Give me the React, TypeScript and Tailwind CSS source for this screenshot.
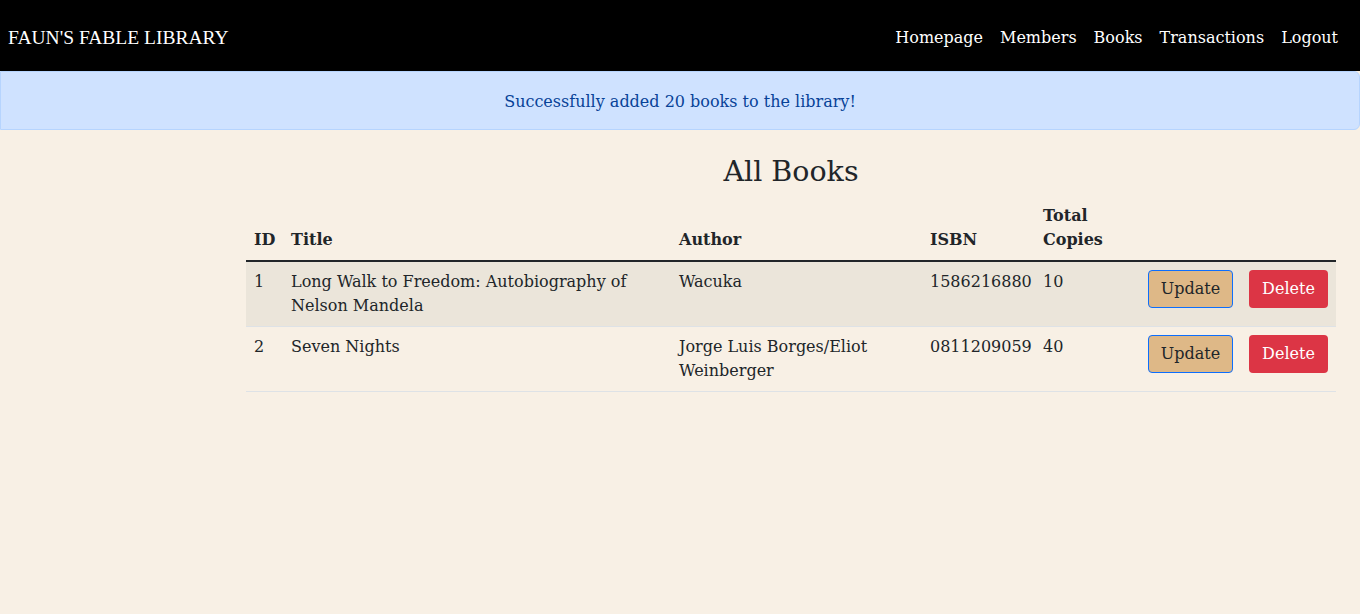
import React from "react";

const books = [
  { id: 1, title: "Long Walk to Freedom: Autobiography of Nelson Mandela", author: "Wacuka", isbn: "1586216880", copies: 10 },
  { id: 2, title: "Seven Nights", author: "Jorge Luis Borges/Eliot Weinberger", isbn: "0811209059", copies: 40 },
];

export default function App() {
  return (
    <div className="min-h-[614px] w-full bg-[#f8f0e5] text-[#212529] font-['DejaVu_Serif',serif] text-[16px] leading-6">
      {/* Navbar */}
      <nav className="h-[71px] bg-black flex items-center justify-between pl-2 pr-[22px] pt-[5px]">
        <span className="text-white text-[19.5px] font-['Liberation_Serif',serif]">FAUN'S FABLE LIBRARY</span>
        <div className="flex items-center gap-[17px] text-white">
          <a>Homepage</a>
          <a>Members</a>
          <a>Books</a>
          <a>Transactions</a>
          <a>Logout</a>
        </div>
      </nav>

      {/* Alert */}
      <div className="h-[59px] flex items-center justify-center pt-[2px] bg-[#cfe2ff] border border-[#b6d4fe] rounded-r-md text-[#084298]">
        Successfully added 20 books to the library!
      </div>

      <div className="pl-[246px] pr-[24px]">
        <h2 className="text-center text-[28.5px] leading-[36px] mt-[24px] mb-[6px]">All Books</h2>
        <table className="w-[1090px] table-fixed border-collapse">
          <colgroup>
            <col className="w-[37px]" />
            <col className="w-[388px]" />
            <col className="w-[251px]" />
            <col className="w-[113px]" />
            <col className="w-[105px]" />
            <col className="w-[101px]" />
            <col className="w-[95px]" />
          </colgroup>
          <thead>
            <tr className="border-b-2 border-[#212529] text-left align-bottom">
              <th className="p-2 font-bold">ID</th>
              <th className="p-2 font-bold">Title</th>
              <th className="p-2 font-bold">Author</th>
              <th className="p-2 font-bold">ISBN</th>
              <th className="p-2 font-bold">Total Copies</th>
              <th className="p-2"></th>
              <th className="p-2"></th>
            </tr>
          </thead>
          <tbody>
            {books.map((b, i) => (
              <tr key={b.id} className={`align-top border-b border-[#dee2e6] ${i % 2 === 0 ? "bg-[#ebe5da]" : ""}`}>
                <td className="p-2">{b.id}</td>
                <td className="p-2">{b.title}</td>
                <td className="p-2">{b.author}</td>
                <td className="p-2">{b.isbn}</td>
                <td className="p-2">{b.copies}</td>
                <td className="p-2">
                  <button className="h-[38px] w-[85px] rounded-[4px] border border-[#0d6efd] bg-[#deb887] text-[#212529]">
                    Update
                  </button>
                </td>
                <td className="p-2">
                  <button className="h-[38px] w-[79px] rounded-[4px] bg-[#dc3545] text-white">Delete</button>
                </td>
              </tr>
            ))}
          </tbody>
        </table>
      </div>
    </div>
  );
}
